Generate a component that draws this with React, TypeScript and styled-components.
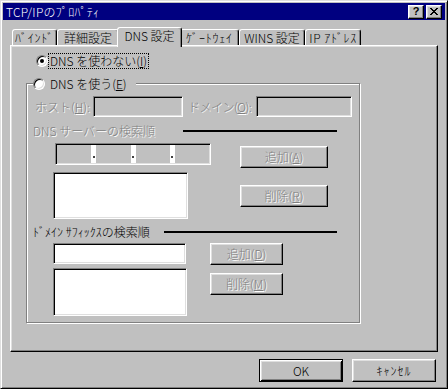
import React from 'react';
import styled, { createGlobalStyle, css } from 'styled-components';

const GlobalStyle = createGlobalStyle`
  html, body {
    margin: 0;
    padding: 0;
    background: #c0c0c0;
  }
  body {
    font-family: "Noto Sans CJK JP", "Liberation Sans", sans-serif;
    font-size: 12px;
  }
`;

const grayText = css`
  color: #808080;
  text-shadow: 1px 1px 0 #fff;
`;

const Window = styled.div`
  box-sizing: border-box;
  width: 448px;
  height: 389px;
  padding: 2px;
  display: flex;
  flex-direction: column;
  background: #c0c0c0;
  border: 1px solid;
  border-color: #dfdfdf #000 #000 #dfdfdf;
  box-shadow: inset 1px 1px 0 #fff, inset -1px -1px 0 #808080;
  font-family: "Noto Sans CJK JP", "Liberation Sans", sans-serif;
  font-size: 12px;
  font-weight: 300;
  line-height: 14px;
  color: #000;
`;

const TitleBar = styled.div`
  height: 17px;
  flex: none;
  display: flex;
  align-items: center;
  padding: 0 3px 0 3px;
  margin-bottom: 1px;
  background: #000080;
  color: #fff;
`;

const Title = styled.span`
  flex: 1;
  white-space: nowrap;
  letter-spacing: 0.3px;
`;

const TitleButton = styled.div`
  box-sizing: border-box;
  width: 16px;
  height: 14px;
  display: flex;
  align-items: center;
  justify-content: center;
  background: #c0c0c0;
  border: 1px solid;
  border-color: #fff #000 #000 #fff;
  box-shadow: inset -1px -1px 0 #808080, inset 1px 1px 0 #dfdfdf;
  color: #000;
  font-family: "Liberation Sans", sans-serif;
  font-weight: bold;
  font-size: 11px;
  line-height: 11px;
  & + & {
    margin-left: 2px;
  }
`;

const TabRow = styled.div`
  display: flex;
  align-items: flex-end;
  height: 18px;
  margin: 6px 7px 0 9px;
  flex: none;
`;

const Tab = styled.div<{ $w: number; $active?: boolean; $spread?: number }>`
  box-sizing: border-box;
  width: ${(p) => p.$w}px;
  height: 16px;
  display: flex;
  align-items: center;
  justify-content: center;
  white-space: nowrap;
  letter-spacing: ${(p) => p.$spread ?? 0}px;
  background: #c0c0c0;
  border: 1px solid;
  border-bottom: none;
  border-color: #fff #000 transparent #fff;
  border-radius: 3px 3px 0 0;
  box-shadow: inset -1px 0 0 #808080;
  ${(p) =>
    p.$active &&
    css`
      width: ${p.$w + 4}px;
      height: 20px;
      margin: 0 -2px -2px;
      padding-bottom: 3px;
      position: relative;
      z-index: 1;
    `}
`;

const Panel = styled.div`
  box-sizing: border-box;
  height: 307px;
  margin: 0 7px;
  padding: 7px 0 0 15px;
  flex: none;
  border: 1px solid;
  border-color: #fff #000 #000 #fff;
  box-shadow: inset -1px -1px 0 #808080, inset 1px 1px 0 #dfdfdf;
`;

const RadioRow = styled.div<{ $indent: number }>`
  display: flex;
  align-items: center;
  height: 16px;
  margin-left: ${(p) => p.$indent}px;
  white-space: nowrap;
`;

const RadioDot = styled.span<{ $checked?: boolean }>`
  box-sizing: border-box;
  flex: none;
  width: 12px;
  height: 12px;
  display: flex;
  align-items: center;
  justify-content: center;
  border-radius: 50%;
  background: #fff;
  border: 1px solid;
  border-color: #808080 #fff #fff #808080;
  box-shadow: inset 1px 1px 0 #000, inset -1px -1px 0 #dfdfdf;
  &::after {
    content: '';
    width: 4px;
    height: 4px;
    border-radius: 50%;
    background: ${(p) => (p.$checked ? '#000' : 'transparent')};
  }
`;

const RadioText = styled.span<{ $gap: number; $focus?: boolean }>`
  margin-left: ${(p) => p.$gap}px;
  padding: 0 1px;
  line-height: 14px;
  ${(p) =>
    p.$focus &&
    css`
      outline: 1px dotted #000;
    `}
`;

const Group = styled.fieldset`
  box-sizing: border-box;
  width: 334px;
  margin: 8px 0 0;
  padding: 6px 0 6px;
  min-inline-size: auto;
  border: 1px solid #808080;
  box-shadow: inset 1px 1px 0 #fff, 1px 1px 0 #fff;
`;

const Legend = styled.legend`
  display: flex;
  align-items: center;
  height: 13px;
  margin-left: 6px;
  padding: 0 8px 0 0;
  background: #c0c0c0;
`;

const FieldRow = styled.div`
  display: flex;
  align-items: center;
  height: 21px;
  padding-left: 8px;
`;

const Label = styled.span<{ $w: number; $left?: number; $disabled?: boolean; $tight?: boolean }>`
  width: ${(p) => p.$w}px;
  margin-left: ${(p) => p.$left ?? 0}px;
  flex: none;
  white-space: nowrap;
  letter-spacing: ${(p) => (p.$tight ? '-0.5px' : '0')};
  ${(p) => p.$disabled && grayText}
`;

const Field = styled.div<{ $w: number; $h: number; $white?: boolean; $left?: number }>`
  box-sizing: border-box;
  flex: none;
  width: ${(p) => p.$w}px;
  height: ${(p) => p.$h}px;
  margin-left: ${(p) => p.$left ?? 0}px;
  background: ${(p) => (p.$white ? '#fff' : '#c0c0c0')};
  border: 1px solid;
  border-color: #808080 #fff #fff #808080;
  box-shadow: inset 1px 1px 0 #000, inset -1px -1px 0 #dfdfdf;
`;

const IpField = styled(Field)`
  display: flex;
  padding: 1px;
`;

const IpPart = styled.div`
  flex: 1;
`;

const IpDot = styled.div`
  width: 5px;
  flex: none;
  display: flex;
  align-items: flex-end;
  justify-content: center;
  padding-bottom: 5px;
  box-sizing: border-box;
  background: #fff;
  &::after {
    content: '';
    width: 2px;
    height: 2px;
    background: #404040;
  }
`;

const Heading = styled.div<{ $top: number }>`
  display: flex;
  align-items: center;
  height: 14px;
  margin-top: ${(p) => p.$top}px;
  padding-left: 6px;
`;

const Rule = styled.div<{ $w: number }>`
  width: ${(p) => p.$w}px;
  height: 2px;
  background: #000;
`;

const Block = styled.div<{ $top: number }>`
  display: flex;
  align-items: flex-start;
  margin-top: ${(p) => p.$top}px;
  padding-left: 26px;
`;

const Column = styled.div<{ $w: number; $gap: number; $left?: number; $top?: number }>`
  display: flex;
  flex-direction: column;
  gap: ${(p) => p.$gap}px;
  width: ${(p) => p.$w}px;
  margin-left: ${(p) => p.$left ?? 0}px;
  margin-top: ${(p) => p.$top ?? 0}px;
`;

const Button = styled.button<{ $w: number; $h?: number; $isDefault?: boolean; $spread?: number }>`
  box-sizing: border-box;
  width: ${(p) => p.$w}px;
  height: ${(p) => p.$h ?? 22}px;
  padding: 0;
  background: #c0c0c0;
  font: inherit;
  letter-spacing: ${(p) => p.$spread ?? 0}px;
  color: #000;
  border: 1px solid;
  border-color: #fff #000 #000 #fff;
  box-shadow: inset -1px -1px 0 #808080, inset 1px 1px 0 #dfdfdf;
  white-space: nowrap;
  &:disabled {
    ${grayText}
  }
  ${(p) =>
    p.$isDefault &&
    css`
      border-color: #000;
      box-shadow: inset 1px 1px 0 #fff, inset -1px -1px 0 #000, inset 2px 2px 0 #dfdfdf,
        inset -2px -2px 0 #808080;
    `}
`;

const Footer = styled.div`
  display: flex;
  justify-content: flex-end;
  gap: 9px;
  margin-top: 7px;
  padding-right: 9px;
`;

const tabs = [
  { label: 'ﾊﾞｲﾝﾄﾞ', w: 45, spread: 0.8 },
  { label: '詳細設定', w: 62 },
  { label: 'DNS 設定', w: 61, active: true },
  { label: 'ｹﾞｰﾄｳｪｲ', w: 59, spread: 0.8 },
  { label: 'WINS 設定', w: 66 },
  { label: 'IP ｱﾄﾞﾚｽ', w: 56, spread: 0.6 },
];

const CloseGlyph = () => (
  <svg width="8" height="7" viewBox="0 0 8 7" shapeRendering="crispEdges">
    <path
      fill="#000"
      d="M0 0h2v1H0zM6 0h2v1H6zM1 1h2v1H1zM5 1h2v1H5zM2 2h4v1H2zM3 3h2v1H3zM2 4h4v1H2zM1 5h2v1H1zM5 5h2v1H5zM0 6h2v1H0zM6 6h2v1H6z"
    />
  </svg>
);

const App: React.FunctionComponent = () => {
  return (
    <>
      <GlobalStyle />
      <Window>
        <TitleBar>
          <Title>TCP/IPのﾌﾟﾛﾊﾟﾃｨ</Title>
          <TitleButton>?</TitleButton>
          <TitleButton>
            <CloseGlyph />
          </TitleButton>
        </TitleBar>

        <TabRow>
          {tabs.map((t) => (
            <Tab key={t.label} $w={t.w} $active={t.active} $spread={t.spread}>
              {t.label}
            </Tab>
          ))}
        </TabRow>

        <Panel>
          <RadioRow $indent={10}>
            <RadioDot $checked />
            <RadioText $gap={1} $focus>
              DNS を使わない(<u>I</u>)
            </RadioText>
          </RadioRow>

          <Group>
            <Legend>
              <RadioDot />
              <RadioText $gap={4}>
                DNS を使う(<u>E</u>)
              </RadioText>
            </Legend>

            <FieldRow>
              <Label $w={58} $disabled>
                ホスト(<u>H</u>):
              </Label>
              <Field $w={90} $h={21} />
              <Label $w={68} $left={5} $disabled $tight>
                ドメイン(<u>O</u>):
              </Label>
              <Field $w={96} $h={21} />
            </FieldRow>

            <Heading $top={7}>
              <Label $w={150} $disabled>
                DNS サーバーの検索順
              </Label>
              <Rule $w={154} />
            </Heading>

            <Block $top={5}>
              <Column $w={158} $gap={7}>
                <IpField $w={156} $h={22} $left={2}>
                  <IpPart />
                  <IpDot />
                  <IpPart />
                  <IpDot />
                  <IpPart />
                  <IpDot />
                  <IpPart />
                </IpField>
                <Field $w={135} $h={47} $white />
              </Column>
              <Column $w={88} $gap={17} $left={29} $top={3}>
                <Button $w={88} disabled>
                  追加(<u>A</u>)
                </Button>
                <Button $w={88} disabled>
                  削除(<u>R</u>)
                </Button>
              </Column>
            </Block>

            <Heading $top={6}>
              <Label $w={131}>ﾄﾞﾒｲﾝ ｻﾌｨｯｸｽの検索順</Label>
              <Rule $w={173} />
            </Heading>

            <Block $top={4}>
              <Column $w={134} $gap={4}>
                <Field $w={133} $h={21} $white />
                <Field $w={134} $h={48} $white />
              </Column>
              <Column $w={73} $gap={8} $left={23}>
                <Button $w={73} disabled>
                  追加(<u>D</u>)
                </Button>
                <Button $w={73} disabled>
                  削除(<u>M</u>)
                </Button>
              </Column>
            </Block>
          </Group>
        </Panel>

        <Footer>
          <Button $w={84} $h={23} $isDefault>
            OK
          </Button>
          <Button $w={84} $h={23} $spread={1}>
            ｷｬﾝｾﾙ
          </Button>
        </Footer>
      </Window>
    </>
  );
};

export default App;
